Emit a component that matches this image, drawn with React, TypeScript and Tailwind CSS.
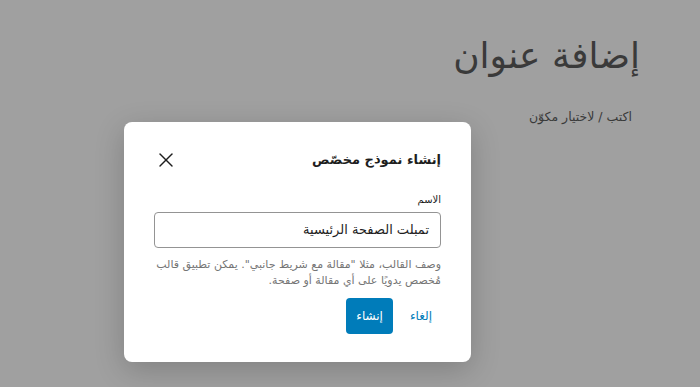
import { X } from "lucide-react";

export default function App() {
  return (
    <div
      dir="rtl"
      className="relative h-[387px] w-[700px] overflow-hidden bg-[#a0a0a0] text-[#1e1e1e]"
      style={{ fontFamily: '"DejaVu Sans", "Noto Sans", sans-serif' }}
    >
      <div className="pr-[60px] pt-[30px]">
        <h1 className="text-[36px] leading-[52px] text-[#3a3a3a]">إضافة عنوان</h1>
        <p className="mt-[26px] pr-[8px] text-[12.5px] text-[#3a3a3a]">اكتب / لاختيار مكوّن</p>
      </div>

      <div className="absolute left-[124px] top-[122px] w-[347px] rounded-lg bg-white px-[30px] pb-[28px] pt-[26px] shadow-[0_8px_30px_rgba(0,0,0,0.2)]">
        <div className="flex items-center justify-between">
          <h2 className="text-[13px] font-bold">إنشاء نموذج مخصّص</h2>
          <button className="flex h-6 w-6 items-center justify-center">
            <X className="h-[26px] w-[26px]" strokeWidth={1.4} />
          </button>
        </div>

        <label className="mt-[20px] block text-[10px] text-[#1e1e1e]">الاسم</label>
        <div className="mt-[5px] flex h-[36px] items-center rounded-sm border border-[#949494] px-[11px] text-[13px]">
          تمبلت الصفحة الرئيسية
        </div>
        <p className="mt-[9px] text-[11px] leading-[16px] text-[#757575]">
          وصف القالب، مثلا "مقالة مع شريط جانبي". يمكن تطبيق قالب مُخصص يدويًا على أي مقالة أو صفحة.
        </p>

        <div className="mt-[9px] flex items-center gap-[8px]">
          <button className="h-[36px] px-[9px] text-[12px] text-[#007cba]">إلغاء</button>
          <button className="h-[36px] rounded-sm bg-[#007cba] px-[10px] text-[12px] text-white">إنشاء</button>
        </div>
      </div>
    </div>
  );
}
